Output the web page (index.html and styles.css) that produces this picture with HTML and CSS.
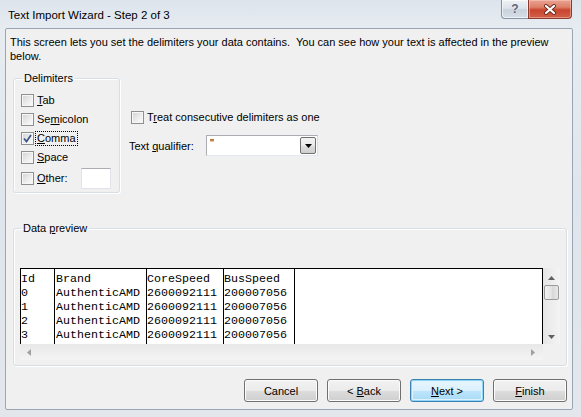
FILE: index.html
```html
<!DOCTYPE html>
<html>
<head>
<meta charset="utf-8">
<title>Text Import Wizard - Step 2 of 3</title>
<link rel="stylesheet" href="styles.css">
</head>
<body>
<div class="window">
  <div class="titlebar">
    <span class="title">Text Import Wizard - Step 2 of 3</span>
    <div class="caption">
      <div class="cap-help">?</div>
      <div class="cap-close">
        <svg width="14" height="11" viewBox="0 0 14 11">
          <path d="M3 2 L11 9 M11 2 L3 9" stroke="#6b2a20" stroke-width="4" stroke-linecap="round"/>
          <path d="M3 2 L11 9 M11 2 L3 9" stroke="#ffffff" stroke-width="2.2" stroke-linecap="round"/>
        </svg>
      </div>
    </div>
  </div>
  <div class="client">
    <p class="intro">This screen lets you set the delimiters your data contains.&nbsp; You can see how your text is affected in the preview<br>below.</p>

    <div class="options">
      <fieldset class="group delims">
        <legend>Delimiters</legend>
        <div class="row"><span class="cb"></span><span class="lbl"><u>T</u>ab</span></div>
        <div class="row"><span class="cb"></span><span class="lbl">Se<u>m</u>icolon</span></div>
        <div class="row"><span class="cb"><svg width="11" height="11" viewBox="0 0 11 11"><path d="M2 5.5 L4.5 8.5 L9 2" fill="none" stroke="#3d5288" stroke-width="1.7"/></svg></span><span class="lbl focus"><u>C</u>omma</span></div>
        <div class="row"><span class="cb"></span><span class="lbl"><u>S</u>pace</span></div>
        <div class="row row-other"><span class="cb"></span><span class="lbl"><u>O</u>ther:</span><span class="textbox"></span></div>
      </fieldset>

      <div class="right-opts">
        <div class="row consec"><span class="cb"></span><span class="lbl">T<u>r</u>eat consecutive delimiters as one</span></div>
        <div class="qualifier">
          <span class="qlabel">Text <u>q</u>ualifier:</span>
          <div class="combo">
            <span class="combo-val">"</span>
            <span class="combo-btn"><svg width="7" height="4" viewBox="0 0 7 4"><path d="M0 0 H7 L3.5 4 Z" fill="#000"/></svg></span>
          </div>
        </div>
      </div>
    </div>

    <fieldset class="group preview">
      <legend>Data <u>p</u>review</legend>
      <div class="pv">
        <div class="data">
          <div class="col c-id"><div>Id</div><div>0</div><div>1</div><div>2</div><div>3</div></div>
          <div class="col c-brand"><div>Brand</div><div>AuthenticAMD</div><div>AuthenticAMD</div><div>AuthenticAMD</div><div>AuthenticAMD</div></div>
          <div class="col c-core"><div>CoreSpeed</div><div>2600092111</div><div>2600092111</div><div>2600092111</div><div>2600092111</div></div>
          <div class="col c-bus"><div>BusSpeed</div><div>200007056</div><div>200007056</div><div>200007056</div><div>200007056</div></div>
          <div class="col c-rest"></div>
        </div>
        <div class="vscroll">
          <svg class="arr" width="7" height="4" viewBox="0 0 7 4"><path d="M0 4 H7 L3.5 0 Z" fill="#606060"/></svg>
          <span class="thumb"></span>
          <span class="spacer"></span>
          <svg class="arr" width="7" height="4" viewBox="0 0 7 4"><path d="M0 0 H7 L3.5 4 Z" fill="#606060"/></svg>
        </div>
        <div class="hscroll">
          <svg class="arr" width="4" height="7" viewBox="0 0 4 7"><path d="M4 0 V7 L0 3.5 Z" fill="#a0a0a0"/></svg>
          <svg class="arr" width="4" height="7" viewBox="0 0 4 7"><path d="M0 0 V7 L4 3.5 Z" fill="#a0a0a0"/></svg>
        </div>
        <div class="corner"></div>
      </div>
    </fieldset>

    <div class="buttons">
      <button class="btn">Cancel</button>
      <button class="btn">&lt; <u>B</u>ack</button>
      <button class="btn default"><u>N</u>ext &gt;</button>
      <button class="btn"><u>F</u>inish</button>
    </div>
  </div>
</div>
</body>
</html>
```

FILE: styles.css
```css
* { box-sizing: border-box; }

html, body {
  margin: 0;
  padding: 0;
}

body {
  width: 581px;
  height: 417px;
  overflow: hidden;
  font-family: "Liberation Sans", Arial, sans-serif;
  font-size: 11px;
  color: #000;
}

.window {
  width: 581px;
  height: 417px;
  display: flex;
  flex-direction: column;
  padding: 0 8px 7px 5px;
  background: linear-gradient(to bottom, #dde4ec 0, #e7ecf1 30px, #dfe5ec 200px, #e3e7ec 417px);
}

.titlebar {
  height: 28px;
  flex: none;
  display: flex;
  justify-content: space-between;
  align-items: flex-start;
}

.title {
  margin: 8px 0 0 3px;
  font-size: 11.5px;
  line-height: 14px;
  color: #000;
}

.caption {
  display: flex;
  margin-right: 1px;
}

.cap-help {
  width: 27px;
  height: 19px;
  border: 1px solid #8593a4;
  border-top: none;
  border-right: none;
  border-radius: 0 0 0 4px;
  background: linear-gradient(to bottom, #eef2f6 0, #dde3ea 45%, #c9d2dc 55%, #d6dde6 100%);
  box-shadow: inset 0 0 0 1px rgba(255,255,255,0.6);
  text-align: center;
  font-weight: bold;
  font-size: 12px;
  line-height: 18px;
  color: #56677b;
  text-shadow: 0 0 1px #fff;
}

.cap-close {
  width: 44px;
  height: 19px;
  border: 1px solid #8a3a2e;
  border-top: none;
  border-radius: 0 0 4px 0;
  background: linear-gradient(to bottom, #e9a493 0, #dd7f68 40%, #c9452d 55%, #d1604a 100%);
  box-shadow: inset 0 0 0 1px rgba(255,210,200,0.45);
  display: flex;
  align-items: center;
  justify-content: center;
}

.client {
  flex: 1;
  background: #f0f0f0;
  border: 1px solid #9aa6b3;
  border-radius: 2px;
  display: flex;
  flex-direction: column;
}

.intro {
  margin: 0;
  padding: 6px 4px 0 4px;
  line-height: 14px;
  white-space: nowrap;
}

.options {
  display: flex;
  margin-top: 9px;
}

.group {
  margin: 0;
  padding: 0;
  border: 1px solid #d5dfe5;
  border-radius: 3px;
  box-shadow: inset 1px 1px 0 #fff, 1px 1px 0 #fff;
}

.group legend {
  padding: 0 2px;
  margin-left: 1px;
  line-height: 13px;
}

.delims {
  margin-left: 7px;
  width: 107px;
  height: 121px;
  padding-left: 7px;
  padding-top: 6px;
}

.row {
  display: flex;
  align-items: center;
  height: 19px;
}

.cb {
  width: 13px;
  height: 13px;
  flex: none;
  border: 1px solid #8e8f8f;
  background: linear-gradient(135deg, #d2d2d2 0, #eeeeee 60%, #fbfbfb 100%);
  box-shadow: inset 0 0 0 1px #f6f6f6;
  display: flex;
  align-items: center;
  justify-content: center;
}

.lbl {
  margin-left: 3px;
  line-height: 13px;
  white-space: nowrap;
}

.focus {
  outline: 1px dotted #000;
  outline-offset: 0;
  padding: 0 1px;
  margin-left: 2px;
}

.row-other {
  height: 21px;
  margin-top: 1px;
}

.textbox {
  width: 30px;
  height: 21px;
  margin-left: 13px;
  background: #fff;
  border: 1px solid #e2e3ea;
  border-top-color: #abadb3;
}

.right-opts {
  margin-left: 9px;
  display: flex;
  flex-direction: column;
}

.consec {
  margin-top: 36px;
  padding-left: 2px;
}

.qualifier {
  display: flex;
  align-items: center;
  margin-top: 8px;
}

.qlabel {
  width: 77px;
  white-space: nowrap;
}

.combo {
  width: 112px;
  height: 21px;
  background: #fff;
  border: 1px solid #abadb3;
  border-bottom-color: #e3e9ef;
  border-right-color: #dbdfe6;
  display: flex;
  justify-content: space-between;
  padding: 1px;
}

.combo-val {
  padding: 1px 0 0 2px;
  font-size: 11px;
  line-height: 11px;
  color: #000;
}

.combo-btn {
  width: 16px;
  height: 17px;
  border: 1px solid #707070;
  border-radius: 2px;
  background: linear-gradient(to bottom, #f2f2f2 0, #ebebeb 50%, #dddddd 51%, #cfcfcf 100%);
  display: flex;
  align-items: center;
  justify-content: center;
}

.preview {
  margin: 29px 5px 0 7px;
  height: 144px;
  padding: 0 0 0 6px;
}

.pv {
  margin-top: 33px;
  width: 540px;
  height: 92px;
  display: grid;
  grid-template-columns: 523px 17px;
  grid-template-rows: 76px 16px;
}

.data {
  background: #fff;
  border: 1px solid #000;
  border-bottom: none;
  display: flex;
  overflow: hidden;
  font-family: "Liberation Mono", "Courier New", monospace;
  font-size: 11.67px;
  line-height: 14px;
}

.col {
  flex: none;
  padding-top: 3px;
  border-right: 1px solid #000;
  white-space: nowrap;
  overflow: hidden;
}

.col div { height: 14px; }

.c-id { width: 34px; }
.c-brand { width: 92px; padding-left: 1px; }
.c-core { width: 77px; }
.c-bus { width: 71px; }
.c-rest { flex: 1; border-right: none; }

.vscroll {
  background: linear-gradient(to right, #e6e6e6, #f4f4f4);
  display: flex;
  flex-direction: column;
  align-items: center;
  padding: 8px 0 5px;
}

.thumb {
  margin-top: 5px;
  width: 15px;
  height: 15px;
  border: 1px solid #9b9b9b;
  border-radius: 2px;
  background: linear-gradient(to right, #f3f3f3, #e2e2e2 50%, #d6d6d6 51%, #e8e8e8);
}

.spacer { flex: 1; }

.hscroll {
  background: linear-gradient(to bottom, #e8e8e8, #f4f4f4);
  display: flex;
  justify-content: space-between;
  align-items: center;
  padding: 0 8px 0 7px;
}

.corner { background: #f0f0f0; }

.buttons {
  display: flex;
  justify-content: flex-end;
  gap: 9px;
  margin-top: 13px;
  padding-right: 5px;
}

.btn {
  width: 74px;
  height: 23px;
  padding: 0;
  font: inherit;
  color: #000;
  border: 1px solid #707070;
  border-radius: 3px;
  background: linear-gradient(to bottom, #f2f2f2 0, #ebebeb 50%, #dddddd 51%, #cfcfcf 100%);
  box-shadow: inset 0 0 0 1px #fcfcfc;
}

.btn.default {
  border-color: #3c7fb1;
  box-shadow: inset 0 0 0 1px #8fd7f7, inset 0 0 0 2px #e0f3fc;
  background: linear-gradient(to bottom, #eaf6fd 0, #d9f0fc 50%, #bee6fd 51%, #a7d9f5 100%);
}
```
